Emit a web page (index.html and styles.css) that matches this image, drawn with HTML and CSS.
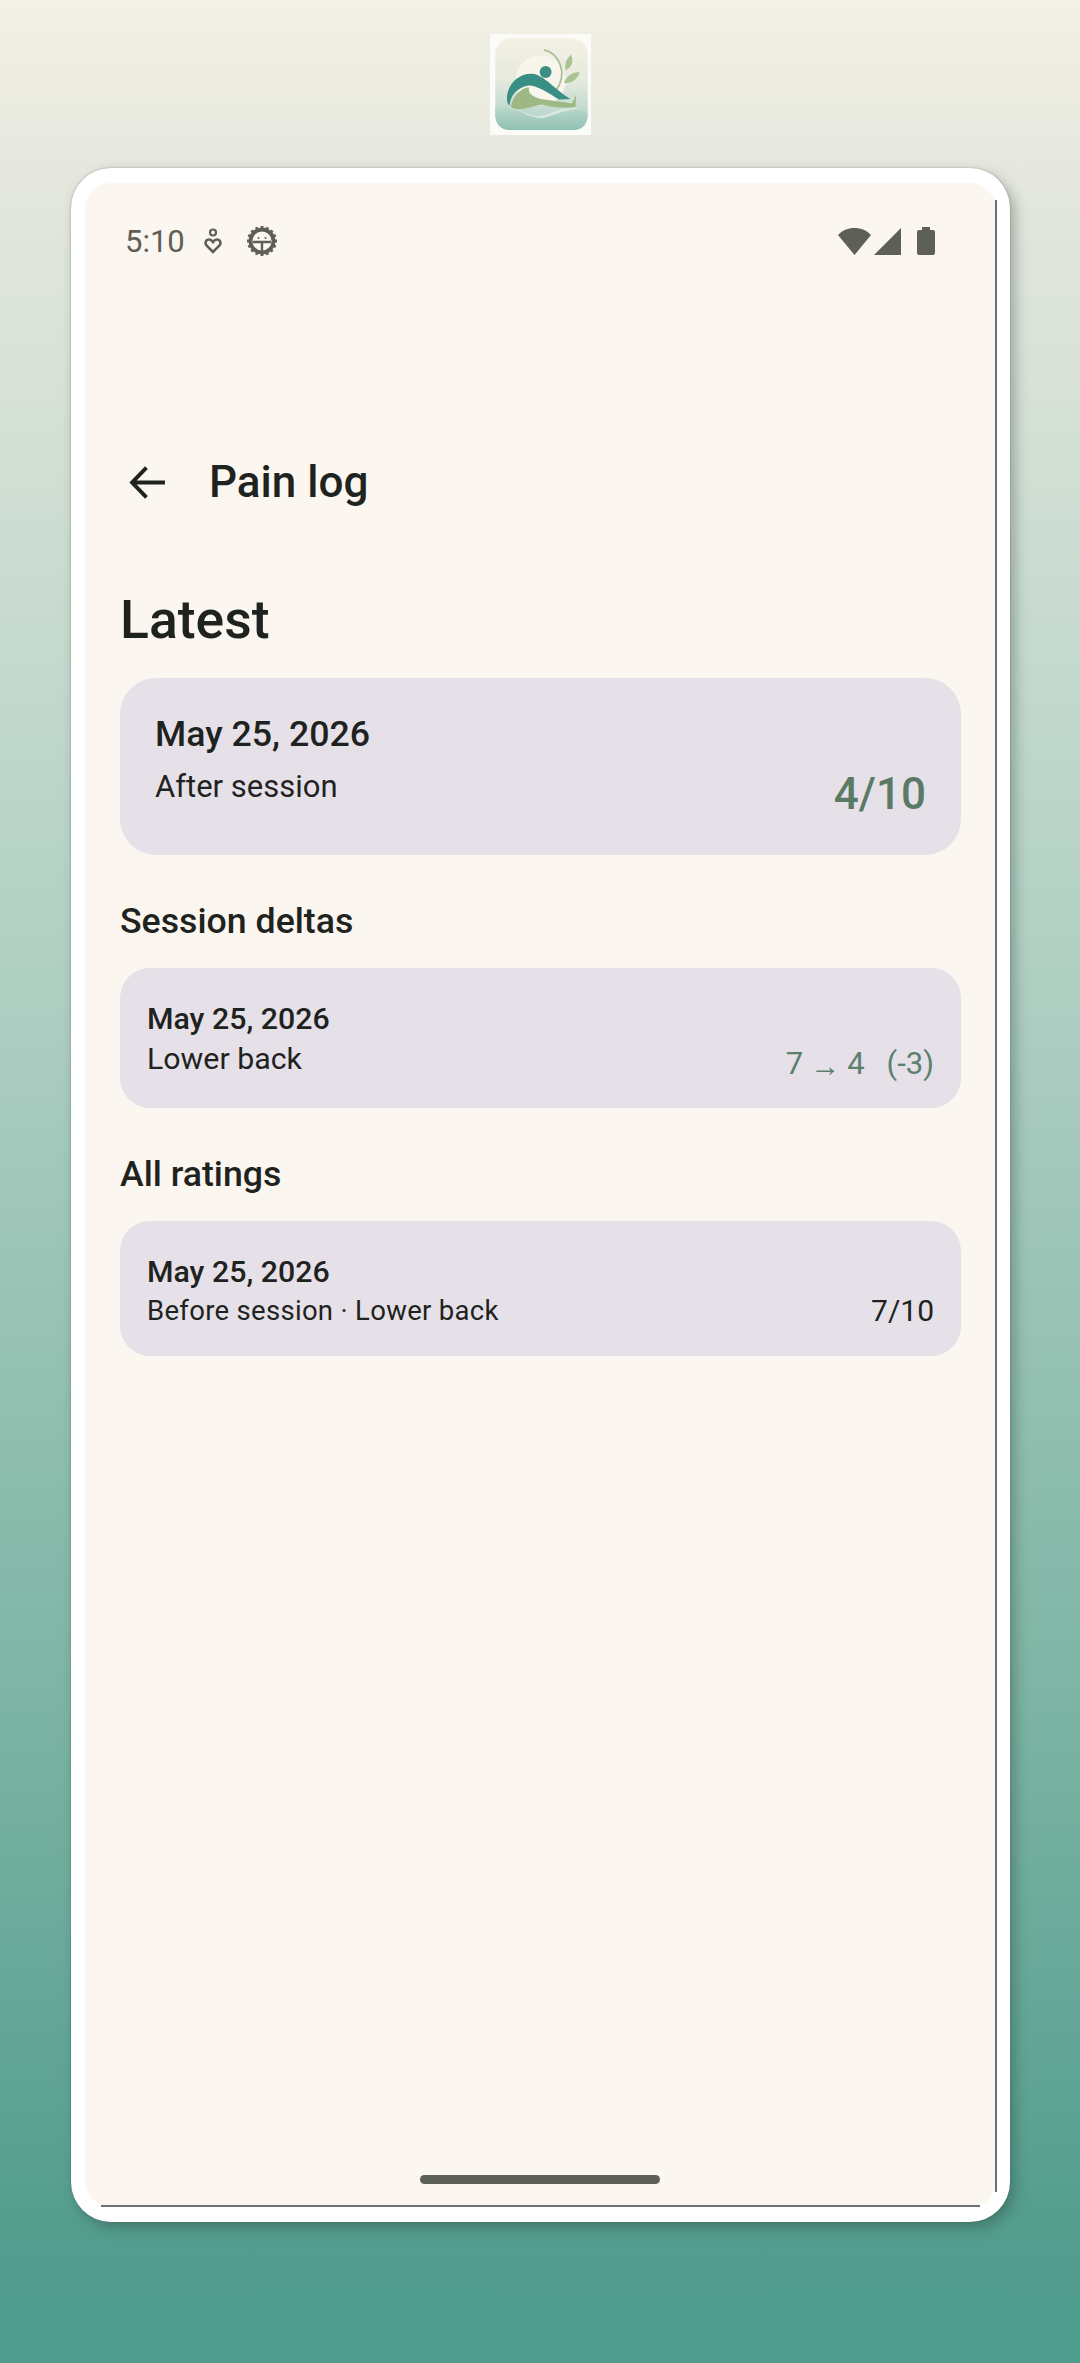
FILE: index.html
```html
<!DOCTYPE html>
<html lang="en">
<head>
    <meta charset="UTF-8">
    <meta name="viewport" content="width=device-width, initial-scale=1.0">
    <title>Pain log</title>
    <link rel="stylesheet" href="styles.css">
</head>
<body>
    <div class="logo-box">
        <svg class="logo" viewBox="87 42 305 305">
            <defs>
                <linearGradient id="logoBg" x1="0" y1="0" x2="0" y2="1">
                    <stop offset="0" stop-color="#f4f0e4"/>
                    <stop offset="0.45" stop-color="#e6eadd"/>
                    <stop offset="0.72" stop-color="#c8ddd2"/>
                    <stop offset="1" stop-color="#a8cfc2"/>
                </linearGradient>
                <linearGradient id="logoWave" x1="0" y1="0" x2="0" y2="1">
                    <stop offset="0" stop-color="#bcd8cc"/>
                    <stop offset="1" stop-color="#8fc1b2"/>
                </linearGradient>
            </defs>
            <rect x="87" y="42" width="305" height="305" fill="#fbfbf8"/>
            <rect x="103" y="55" width="279" height="277" rx="48" fill="url(#logoBg)"/>
            <circle cx="240" cy="182" r="76" fill="#f8f5ec"/>
            <path d="M103 262 C150 255 190 295 250 288 C300 280 340 262 382 278 L382 284 Q382 332 334 332 L151 332 Q103 332 103 284 Z" fill="url(#logoWave)"/>
            <path d="M170 268 C200 290 240 295 270 280 C300 268 330 262 360 268 C320 268 290 285 250 296 C220 298 190 285 170 268 Z" fill="#d8e8de"/>
            <path d="M250 90 C295 100 325 160 285 215" fill="none" stroke="#a3bf8f" stroke-width="5"/>
            <path d="M316 152 C310 130 320 115 332 105 C340 125 335 140 316 152 Z" fill="#a9c493"/>
            <path d="M310 190 C320 165 340 155 358 158 C350 180 335 190 310 190 Z" fill="#a9c493"/>
            <path d="M150 262 C155 230 180 205 205 203 C200 220 215 232 240 238 L335 252 L347 224 L345 262 C310 268 270 262 245 256 C215 256 180 282 150 262 Z" fill="#9db883"/>
            <path d="M138 238 C138 195 172 160 215 162 C250 165 285 212 330 238 L295 240 C262 220 228 196 200 198 C168 205 148 228 146 258 C141 254 138 246 138 238 Z" fill="#3a8f84"/>
            <circle cx="255" cy="157" r="18" fill="#3a8f84"/>
        </svg>
    </div>

    <div class="device">
        <div class="screen">
            <div class="status-bar">
                <div class="status-left">
                    <span class="time">5:10</span>
                    <svg class="icon-heart" viewBox="0 0 18 28">
                        <circle cx="9" cy="5.5" r="3" fill="none" stroke="#5f5f5a" stroke-width="2.2"/>
                        <path d="M9 25 L2.5 18.5 C0.5 16 2 12.5 5 12.5 C6.8 12.5 8 13.5 9 15 C10 13.5 11.2 12.5 13 12.5 C16 12.5 17.5 16 15.5 18.5 Z" fill="none" stroke="#5f5f5a" stroke-width="2.6"/>
                    </svg>
                    <svg class="icon-gear" viewBox="0 0 32 32">
                        <circle cx="16" cy="16" r="11.5" fill="none" stroke="#5f5f5a" stroke-width="3.8"/>
                        <path d="M16 1v4M16 27v4M1 16h4M27 16h4M5.4 5.4l2.8 2.8M23.8 23.8l2.8 2.8M5.4 26.6l2.8-2.8M23.8 8.2l2.8-2.8M10.3 2.2l1.5 3.6M20.2 26.2l1.5 3.6M2.2 10.3l3.6 1.5M26.2 20.2l3.6 1.5M2.2 21.7l3.6-1.5M26.2 11.8l3.6-1.5M10.3 29.8l1.5-3.6M20.2 5.8l1.5-3.6" stroke="#5f5f5a" stroke-width="2.8"/>
                        <path d="M7 17h18M16 17v9" stroke="#5f5f5a" stroke-width="2.4"/>
                        <circle cx="12.5" cy="13" r="1" fill="#5f5f5a"/>
                        <circle cx="19.5" cy="13" r="1" fill="#5f5f5a"/>
                    </svg>
                </div>
                <div class="status-right">
                    <svg class="icon-wifi" viewBox="0 0 33 27"><path d="M16.5 27 L0 7 C4 2.5 10 0 16.5 0 C23 0 29 2.5 33 7 Z" fill="#5f5f5a"/></svg>
                    <svg class="icon-signal" viewBox="0 0 27 27"><path d="M0 27 L27 0 V27 Z" fill="#5f5f5a"/></svg>
                    <svg class="icon-battery" viewBox="0 0 18 28"><path d="M5 0h8v3h3a2 2 0 0 1 2 2v21a2 2 0 0 1-2 2H2a2 2 0 0 1-2-2V5a2 2 0 0 1 2-2h3z" fill="#5f5f5a"/></svg>
                </div>
            </div>

            <div class="toolbar">
                <svg class="back" viewBox="0 0 36 36"><path d="M35 18H3M17 3.5L3 18l14 14.5" fill="none" stroke="#1f2320" stroke-width="3.8"/></svg>
                <span class="toolbar-title">Pain log</span>
            </div>

            <div class="content">
                <h1>Latest</h1>
                <div class="card card-latest">
                    <div>
                        <div class="latest-date">May 25, 2026</div>
                        <div class="latest-sub">After session</div>
                    </div>
                    <div class="latest-score">4/10</div>
                </div>

                <h2>Session deltas</h2>
                <div class="card card-row card-delta">
                    <div>
                        <div class="row-date">May 25, 2026</div>
                        <div class="row-sub">Lower back</div>
                    </div>
                    <div class="delta">
                        <span>7</span>
                        <span class="arrow">→</span>
                        <span>4</span>
                        <span class="delta-diff">(-3)</span>
                    </div>
                </div>

                <h2>All ratings</h2>
                <div class="card card-row card-rating">
                    <div>
                        <div class="row-date">May 25, 2026</div>
                        <div class="row-note">Before session · Lower back</div>
                    </div>
                    <div class="rating">7/10</div>
                </div>
            </div>

            <div class="home-bar"></div>
            <div class="edge-right"></div>
            <div class="edge-bottom"></div>
        </div>
    </div>
</body>
</html>
```

FILE: styles.css
```css
html, body {
    height: 100%;
}
body {
    margin: 0;
    font-family: Roboto, "Noto Sans", sans-serif;
    color: #1f2320;
    background: linear-gradient(180deg, #f3f0e5 0%, #e4e7de 8%, #b5d2c6 38%, #80b6a6 70%, #4f9b8c 97%);
    display: flex;
    flex-direction: column;
    align-items: center;
    padding-top: 34px;
    box-sizing: border-box;
    overflow: hidden;
}
.logo-box {
    width: 101px;
    height: 101px;
    flex: none;
}
.logo {
    display: block;
    width: 101px;
    height: 101px;
}
.device {
    width: 939px;
    height: 2054px;
    margin-top: 33px;
    margin-left: 1px;
    padding: 15px 14px 15px 14px;
    box-sizing: border-box;
    background: #fff;
    border-radius: 40px;
    box-shadow: 5px 6px 14px rgba(40, 60, 50, 0.35), 0 0 2px rgba(40, 60, 50, 0.4);
    flex: none;
}
.screen {
    position: relative;
    height: 100%;
    background: #fbf6ef;
    border-radius: 26px;
    display: flex;
    flex-direction: column;
}
.status-bar {
    display: flex;
    justify-content: space-between;
    align-items: center;
    height: 40px;
    margin-top: 38px;
    padding: 0 61px 0 40px;
}
.status-left, .status-right {
    display: flex;
    align-items: center;
}
.time {
    font-size: 31px;
    color: #5f5f5a;
    width: 60px;
}
.icon-heart {
    width: 18px;
    height: 28px;
    margin-left: 19px;
}
.icon-gear {
    width: 32px;
    height: 32px;
    margin-left: 24px;
}
.icon-wifi {
    width: 33px;
    height: 27px;
}
.icon-signal {
    width: 27px;
    height: 27px;
    margin-left: 3px;
}
.icon-battery {
    width: 18px;
    height: 28px;
    margin-left: 16px;
}
.toolbar {
    display: flex;
    align-items: center;
    height: 60px;
    margin-top: 191px;
    padding-left: 44px;
}
.back {
    width: 37px;
    height: 37px;
}
.toolbar-title {
    font-size: 44px;
    margin-left: 43px;
    font-weight: 500;
}
.content {
    padding: 0 35px;
    margin-top: 78px;
}
h1 {
    font-size: 53.5px;
    font-weight: 500;
    line-height: 60px;
    margin: 0 0 28px;
}
h2 {
    font-size: 35.7px;
    font-weight: 500;
    line-height: 40px;
    margin: 46px 0 27px;
}
.card {
    background: #e6e1e9;
    display: flex;
    justify-content: space-between;
    align-items: flex-end;
}
.card-latest {
    height: 177px;
    border-radius: 36px;
    padding: 36px 35px 36px 35px;
    box-sizing: border-box;
}
.card-latest > div:first-child {
    align-self: flex-start;
}
.latest-date {
    font-size: 35.7px;
    font-weight: 500;
    line-height: 40px;
}
.latest-sub {
    font-size: 31px;
    line-height: 36px;
    margin-top: 15px;
}
.latest-score {
    font-size: 44px;
    font-weight: 500;
    color: #5b7a66;
    line-height: 50px;
    margin-bottom: 0;
}
.card-row {
    height: 140px;
    border-radius: 30px;
    padding: 23px 27px 26px 27px;
    box-sizing: border-box;
}
.card-delta {
    padding-bottom: 30px;
}
.card-rating {
    height: 135px;
}
.card-rating .row-date {
    margin-top: 6px;
}
.row-date {
    font-size: 30.3px;
    font-weight: 500;
    line-height: 40px;
}
.row-sub {
    font-size: 30.3px;
    line-height: 39px;
}
.row-note {
    font-size: 27.5px;
    line-height: 38px;
    letter-spacing: 0.3px;
}
.delta {
    display: flex;
    align-items: center;
    gap: 7px;
    font-size: 31px;
    color: #5c806e;
    line-height: 40px;
    margin-bottom: -6px;
}
.arrow {
    font-size: 30px;
    position: relative;
    top: 2px;
}
.delta-diff {
    margin-left: 15px;
}
.rating {
    font-size: 30px;
    line-height: 38px;
}
.home-bar {
    position: absolute;
    left: 335px;
    bottom: 23px;
    width: 240px;
    height: 9px;
    border-radius: 5px;
    background: #5f5f5a;
}
.edge-right {
    position: absolute;
    top: 17px;
    bottom: 15px;
    right: -1px;
    width: 2px;
    background: #6f6f6f;
}
.edge-bottom {
    position: absolute;
    left: 16px;
    right: 16px;
    bottom: 0;
    height: 2px;
    background: #6f6f6f;
}
```
